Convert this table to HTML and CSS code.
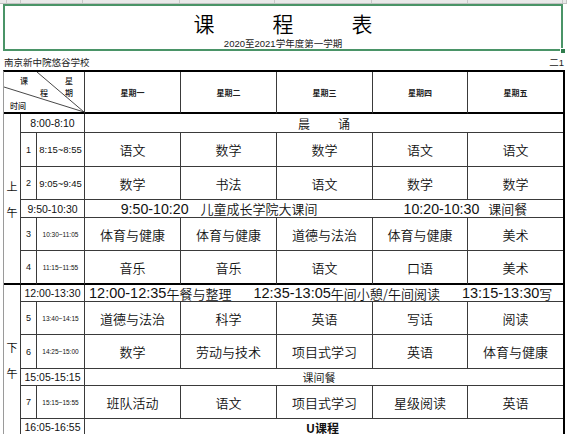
FILE: index.html
```html
<!DOCTYPE html>
<html lang="zh-CN">
<head>
<meta charset="utf-8">
<title>课程表</title>
<link rel="stylesheet" href="styles.css">
</head>
<body>
<div class="colbar">
  <span></span><span></span><span></span><span></span><span></span><span></span><span></span><span></span><span></span>
</div>

<div class="titlebox">
  <div class="title"><span>课</span><span>程</span><span>表</span></div>
  <div class="subtitle">2020至2021学年度第一学期</div>
  <i class="handle"></i>
</div>

<div class="schoolrow">
  <span>南京新中院悠谷学校</span>
  <span>二1</span>
</div>

<div class="tt">
  <!-- header -->
  <div class="c hdr span3 thick">
    <svg class="diag" width="80" height="40" viewBox="0 0 80 40"><line x1="33" y1="0" x2="80" y2="40"/><line x1="0" y1="15" x2="80" y2="40"/></svg>
    <span class="dl dl-ke">课</span>
    <span class="dl dl-xing">星</span>
    <span class="dl dl-cheng">程</span>
    <span class="dl dl-qi">期</span>
    <span class="dl dl-sj">时间</span>
  </div>
  <div class="c day thick">星期一</div>
  <div class="c day thick">星期二</div>
  <div class="c day thick">星期三</div>
  <div class="c day thick">星期四</div>
  <div class="c day thick last">星期五</div>

  <!-- 8:00 -->
  <div class="c ap rows6 thick"><span>上</span><span>午</span></div>
  <div class="c rng span2">8:00-8:10</div>
  <div class="c span5 last chen"><span>晨</span><span>诵</span></div>

  <!-- 1 -->
  <div class="c num">1</div>
  <div class="c tm">8:15~8:55</div>
  <div class="c sub">语文</div>
  <div class="c sub">数学</div>
  <div class="c sub">数学</div>
  <div class="c sub">语文</div>
  <div class="c sub last">语文</div>

  <!-- 2 -->
  <div class="c num">2</div>
  <div class="c tm">9:05~9:45</div>
  <div class="c sub">数学</div>
  <div class="c sub">书法</div>
  <div class="c sub">语文</div>
  <div class="c sub">数学</div>
  <div class="c sub last">数学</div>

  <!-- 9:50 -->
  <div class="c rng span2">9:50-10:30</div>
  <div class="c span5 last big">
    <span class="seg"><span class="d">9:50-10:20</span><span class="k sp">儿童成长学院大课间</span></span>
    <span class="seg"><span class="d">10:20-10:30</span><span class="k sp2">课间餐</span></span>
  </div>

  <!-- 3 -->
  <div class="c num">3</div>
  <div class="c tm s">10:30~11:05</div>
  <div class="c sub">体育与健康</div>
  <div class="c sub">体育与健康</div>
  <div class="c sub">道德与法治</div>
  <div class="c sub">体育与健康</div>
  <div class="c sub last">美术</div>

  <!-- 4 -->
  <div class="c num thick">4</div>
  <div class="c tm s thick">11:15~11:55</div>
  <div class="c sub thick">音乐</div>
  <div class="c sub thick">音乐</div>
  <div class="c sub thick">语文</div>
  <div class="c sub thick">口语</div>
  <div class="c sub thick last">美术</div>

  <!-- 12:00 -->
  <div class="c ap rows6"><span>下</span><span>午</span></div>
  <div class="c rng span2">12:00-13:30</div>
  <div class="c span5 last noon">
    <span class="d2">12:00-12:35</span><span class="k">午餐与整理</span><span class="d2 gap">12:35-13:05</span><span class="k">午间小憩/午间阅读</span><span class="d2 gap">13:15-13:30</span><span class="k">写</span>
  </div>

  <!-- 5 -->
  <div class="c num">5</div>
  <div class="c tm s">13:40~14:15</div>
  <div class="c sub">道德与法治</div>
  <div class="c sub">科学</div>
  <div class="c sub">英语</div>
  <div class="c sub">写话</div>
  <div class="c sub last">阅读</div>

  <!-- 6 -->
  <div class="c num">6</div>
  <div class="c tm s">14:25~15:00</div>
  <div class="c sub">数学</div>
  <div class="c sub">劳动与技术</div>
  <div class="c sub">项目式学习</div>
  <div class="c sub">英语</div>
  <div class="c sub last">体育与健康</div>

  <!-- 15:05 -->
  <div class="c rng span2">15:05-15:15</div>
  <div class="c span5 last snack">课间餐</div>

  <!-- 7 -->
  <div class="c num">7</div>
  <div class="c tm s">15:15~15:55</div>
  <div class="c sub">班队活动</div>
  <div class="c sub">语文</div>
  <div class="c sub">项目式学习</div>
  <div class="c sub">星级阅读</div>
  <div class="c sub last">英语</div>

  <!-- 16:05 -->
  <div class="c rng span2">16:05-16:55</div>
  <div class="c span5 last ucourse">U课程</div>
</div>
</body>
</html>
```

FILE: styles.css
```css
* {
  box-sizing: border-box;
  margin: 0;
  padding: 0;
}

html,
body {
  background: #fff;
}

body {
  width: 567px;
  height: 434px;
  overflow: hidden;
  font-family: "Noto Sans CJK SC", sans-serif;
  color: #111;
}

/* Excel column header strip (mostly scrolled off) */
.colbar {
  height: 4px;
  display: grid;
  grid-template-columns: 7px 14px 62px 97px 95px 97px 96px 95px 1fr;
  background: #e9e9e9;
  border-bottom: 1px solid #c2c2c2;
  overflow: hidden;
}

.colbar span {
  border-right: 1px solid #c8c8c8;
}

/* Title block */
.titlebox {
  position: relative;
  height: 47px;
  margin: 0 4px 0 3px;
  border: 2px solid #4a9467;
  display: flex;
  flex-direction: column;
  align-items: center;
  padding-top: 5px;
}

.title {
  display: flex;
  gap: 58px;
  font-size: 21px;
  line-height: 24px;
  font-weight: 350;
  color: #000;
}

.subtitle {
  margin-top: 3px;
  font-family: "Liberation Sans", "Noto Sans CJK SC", sans-serif;
  font-size: 9.5px;
  line-height: 12px;
  color: #222;
}

.handle {
  position: absolute;
  right: -5px;
  bottom: -5px;
  width: 6px;
  height: 6px;
  background: #2f7d4d;
  border: 1px solid #fff;
}

.schoolrow {
  height: 19px;
  padding: 2px 3px 0 4px;
  display: flex;
  justify-content: space-between;
  align-items: center;
  font-family: "Liberation Sans", "Noto Sans CJK SC", sans-serif;
  font-size: 9.5px;
  color: #222;
}

/* Timetable grid */
.tt {
  display: grid;
  margin-left: 3px;
  width: 562px;
  grid-template-columns: 17px 16px 48px 96px 96px 96px 95px 95px;
  grid-template-rows: 42px 19px 34px 33px 18px 33px 34px 17px 33px 34px 17px 33px 17px;
  border-top: 2px solid #000;
  border-left: 1px solid #9a9a9a;
  border-right: 2px solid #000;
}

.c {
  border-right: 1px solid #3a3a3a;
  border-bottom: 1px solid #3a3a3a;
  display: flex;
  align-items: center;
  justify-content: center;
  overflow: hidden;
  white-space: nowrap;
  color: #111;
}

.c.last {
  border-right: 0;
}

.c.thick {
  border-bottom: 2px solid #000;
}

.span2 {
  grid-column: span 2;
}

.span3 {
  grid-column: span 3;
}

.span5 {
  grid-column: span 5;
}

.rows6 {
  grid-row: span 6;
}

/* header cells */
.hdr {
  position: relative;
}

.diag {
  position: absolute;
  left: 0;
  top: 0;
}

.diag line {
  stroke: #333;
  stroke-width: 0.9;
}

.dl {
  position: absolute;
  font-size: 8px;
  line-height: 9px;
  font-weight: 500;
  color: #222;
}

.dl-ke { left: 16px; top: 4px; }
.dl-xing { left: 61px; top: 4px; }
.dl-cheng { left: 36px; top: 16px; }
.dl-qi { left: 61px; top: 16px; }
.dl-sj { left: 6px; top: 29px; }

.day {
  font-size: 8px;
  font-weight: 700;
  color: #222;
}

/* left column */
.ap {
  flex-direction: column;
  font-size: 11px;
  line-height: 26px;
}

.num {
  font-family: "Liberation Sans", sans-serif;
  font-size: 9px;
}

.tm {
  font-family: "Liberation Sans", sans-serif;
  font-size: 9.5px;
}

.tm.s {
  font-size: 6.5px;
}

.rng {
  font-family: "Liberation Sans", sans-serif;
  font-size: 10.5px;
}

/* subjects */
.sub {
  font-size: 13px;
  font-weight: 350;
}

/* merged rows */
.chen {
  gap: 28px;
  font-size: 12px;
  font-weight: 350;
}

.big {
  gap: 86px;
  font-size: 14px;
}

.seg {
  display: flex;
  align-items: center;
}

.d {
  font-family: "Liberation Sans", sans-serif;
  font-size: 14.2px;
}

.k {
  font-size: 13px;
  font-weight: 350;
}

.sp {
  margin-left: 12px;
}

.sp2 {
  margin-left: 9px;
}

.noon {
  justify-content: flex-start;
  padding-left: 4px;
}

.d2 {
  font-family: "Liberation Sans", sans-serif;
  font-size: 14.5px;
}

.d2.gap {
  margin-left: 22px;
}

.snack {
  font-size: 11px;
  font-weight: 350;
  padding-right: 10px;
}

.ucourse {
  font-size: 12px;
  font-weight: 700;
  padding-right: 3px;
}
```
